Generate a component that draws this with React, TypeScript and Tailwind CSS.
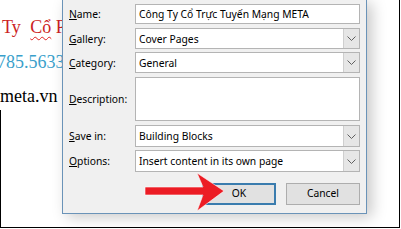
import React from "react";

type Row = {
    key: string;
    rest: string;
    value: string;
    combo: boolean;
    h: string;
    mt: string;
};

const rows: Row[] = [
    { key: "N", rest: "ame:", value: "Công Ty Cổ Trực Tuyến Mạng META", combo: false, h: "h-[20px]", mt: "mt-0" },
    { key: "G", rest: "allery:", value: "Cover Pages", combo: true, h: "h-[21px]", mt: "mt-[4px]" },
    { key: "C", rest: "ategory:", value: "General", combo: true, h: "h-[21px]", mt: "mt-[3px]" },
    { key: "D", rest: "escription:", value: "", combo: false, h: "h-[44px]", mt: "mt-[4px]" },
    { key: "S", rest: "ave in:", value: "Building Blocks", combo: true, h: "h-[22px]", mt: "mt-[4px]" },
    { key: "O", rest: "ptions:", value: "Insert content in its own page", combo: true, h: "h-[22px]", mt: "mt-[3px]" },
];

function Chevron() {
    return (
        <svg width="9" height="5" viewBox="0 0 9 5" fill="none">
            <path d="M0.5 0.5 L4.5 4.5 L8.5 0.5" stroke="#606060" strokeWidth="1" />
        </svg>
    );
}

function FieldRow({ row }: { row: Row }) {
    return (
        <div className={`flex items-center ${row.mt}`}>
            <label className="w-[66px] text-[10.3px] leading-[14px] text-black">
                <span className="underline underline-offset-[1px]">{row.key}</span>
                {row.rest}
            </label>
            <div className={`flex w-[225px] ${row.h} border border-[#b4b4b4] bg-white`}>
                <span className="flex-1 pl-[3px] flex items-center text-[10.3px] leading-[14px] text-black whitespace-nowrap overflow-hidden">
                    {row.value}
                </span>
                {row.combo && (
                    <span className="w-[16px] h-full flex items-center justify-center bg-[#e6e6e6] border-l border-[#cfcfcf]">
                        <Chevron />
                    </span>
                )}
            </div>
        </div>
    );
}

export default function App() {
    return (
        <div className="w-[401px] h-[229px] bg-white overflow-hidden" style={{ fontFamily: '"Noto Sans", sans-serif' }}>
            <div className="relative w-[400px] h-[228px] flex border-r border-b border-black">
                <div className="w-[62px] flex flex-col" style={{ fontFamily: '"Liberation Serif", serif' }}>
                    <div className="h-[110px] pl-[2px] pt-[18px] text-[18px] leading-[18px] whitespace-nowrap overflow-hidden">
                        <div className="text-[#cc1f24]">
                            Ty <span className="ml-[5px] underline decoration-wavy decoration-[#e02020] decoration-1 underline-offset-[3px]">Cổ</span> P
                        </div>
                        <div className="mt-[17px] -ml-[5px] text-[#3a9fcb]">785.5633</div>
                        <div className="mt-[16px] -ml-[2px] text-black">meta.vn</div>
                    </div>
                    <div className="flex-1 border-l border-black" />
                </div>

                <div className="w-[305px] h-[214px] shrink-0 bg-[#f0f0f0] border-l border-r border-b border-[#6a93b8] shadow-[5px_3px_14px_rgba(0,0,0,0.22)] pl-[6px] pt-[4px]">
                    {rows.map((row) => (
                        <FieldRow key={row.key} row={row} />
                    ))}
                    <div className="flex justify-end gap-[10px] pr-[6px] mt-[11px]">
                        <button className="w-[74px] h-[22px] bg-[#e1e1e1] border-2 border-[#3a7cae] text-[10.3px] text-black">
                            OK
                        </button>
                        <button className="w-[74px] h-[22px] bg-[#e1e1e1] border border-[#adadad] text-[10.3px] text-black">
                            Cancel
                        </button>
                    </div>
                </div>

                <div className="flex-1" />

                <svg className="absolute left-0 top-0 pointer-events-none" width="400" height="228" viewBox="0 0 400 228">
                    <polygon
                        points="145,187 203,187 197,173 224,191 197,211 203,195 145,195"
                        fill="#ec1c24"
                        stroke="#ffffff"
                        strokeOpacity="0.6"
                        strokeWidth="1"
                    />
                </svg>
            </div>
        </div>
    );
}
